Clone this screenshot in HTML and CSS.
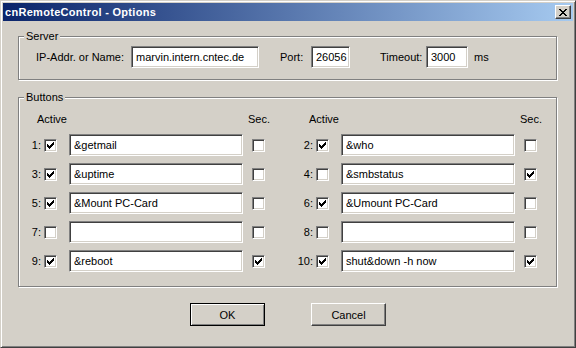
FILE: index.html
```html
<!DOCTYPE html>
<html lang="en">
<head>
    <meta charset="UTF-8">
    <title>cnRemoteControl - Options</title>
    <link rel="stylesheet" href="styles.css">
</head>
<body>
    <svg class="defs" width="0" height="0">
        <symbol id="tick" viewBox="0 0 7 7">
            <path d="M6 0h1v1h-1z M5 1h2v1h-2z M0 2h1v1h-1z M4 2h3v1h-3z M0 3h2v1h-2z M3 3h3v1h-3z M0 4h5v1h-5z M1 5h3v1h-3z M2 6h1v1h-1z" fill="#000"/>
        </symbol>
    </svg>

    <div class="window">
        <div class="titlebar">
            <span class="title">cnRemoteControl - Options</span>
            <button class="close-btn">
                <svg width="8" height="7" viewBox="0 0 8 7" shape-rendering="crispEdges">
                    <path d="M0 0h2v1h-2z M6 0h2v1h-2z M1 1h2v1h-2z M5 1h2v1h-2z M2 2h4v1h-4z M3 3h2v1h-2z M2 4h4v1h-4z M1 5h2v1h-2z M5 5h2v1h-2z M0 6h2v1h-2z M6 6h2v1h-2z" fill="#000"/>
                </svg>
            </button>
        </div>

        <div class="content">
            <fieldset class="group server">
                <legend>Server</legend>
                <div class="server-row">
                    <label class="lbl-host">IP-Addr. or Name:</label>
                    <input class="edit edit-host" value="marvin.intern.cntec.de">
                    <label class="lbl-port">Port:</label>
                    <input class="edit edit-port" value="26056">
                    <label class="lbl-timeout">Timeout:</label>
                    <input class="edit edit-timeout" value="3000">
                    <span class="unit">ms</span>
                </div>
            </fieldset>

            <fieldset class="group buttons">
                <legend>Buttons</legend>
                <div class="columns">
                    <div class="col">
                        <div class="head"><span class="head-active">Active</span><span>Sec.</span></div>
                        <div class="row"><span class="num">1:</span><span class="cb"><svg><use href="#tick"/></svg></span><input class="edit cmd" value="&amp;getmail"><span class="cb sec"></span></div>
                        <div class="row"><span class="num">3:</span><span class="cb"><svg><use href="#tick"/></svg></span><input class="edit cmd" value="&amp;uptime"><span class="cb sec"></span></div>
                        <div class="row"><span class="num">5:</span><span class="cb"><svg><use href="#tick"/></svg></span><input class="edit cmd" value="&amp;Mount PC-Card"><span class="cb sec"></span></div>
                        <div class="row"><span class="num">7:</span><span class="cb"></span><input class="edit cmd" value=""><span class="cb sec"></span></div>
                        <div class="row"><span class="num">9:</span><span class="cb"><svg><use href="#tick"/></svg></span><input class="edit cmd" value="&amp;reboot"><span class="cb sec"><svg><use href="#tick"/></svg></span></div>
                    </div>
                    <div class="col">
                        <div class="head"><span class="head-active">Active</span><span>Sec.</span></div>
                        <div class="row"><span class="num">2:</span><span class="cb"><svg><use href="#tick"/></svg></span><input class="edit cmd" value="&amp;who"><span class="cb sec"></span></div>
                        <div class="row"><span class="num">4:</span><span class="cb"></span><input class="edit cmd" value="&amp;smbstatus"><span class="cb sec"><svg><use href="#tick"/></svg></span></div>
                        <div class="row"><span class="num">6:</span><span class="cb"><svg><use href="#tick"/></svg></span><input class="edit cmd" value="&amp;Umount PC-Card"><span class="cb sec"></span></div>
                        <div class="row"><span class="num">8:</span><span class="cb"></span><input class="edit cmd" value=""><span class="cb sec"></span></div>
                        <div class="row"><span class="num">10:</span><span class="cb"><svg><use href="#tick"/></svg></span><input class="edit cmd" value="shut&amp;down -h now"><span class="cb sec"><svg><use href="#tick"/></svg></span></div>
                    </div>
                </div>
            </fieldset>

            <div class="actions">
                <button class="btn default">OK</button>
                <button class="btn">Cancel</button>
            </div>
        </div>
    </div>
</body>
</html>
```

FILE: styles.css
```css
* {
    box-sizing: border-box;
}

body {
    margin: 0;
    font-family: "Liberation Sans", Arial, sans-serif;
    font-size: 11px;
    color: #000;
    background: #d4d0c8;
}

.defs {
    position: absolute;
}

.window {
    width: 576px;
    height: 348px;
    padding: 2px;
    background: #d4d0c8;
    border: 1px solid;
    border-color: #d4d0c8 #404040 #404040 #d4d0c8;
    box-shadow: inset 1px 1px #fff, inset -1px -1px #808080;
}

.titlebar {
    height: 18px;
    display: flex;
    align-items: center;
    justify-content: space-between;
    padding: 0 2px;
    background: linear-gradient(to right, #0a246a, #a6caf0);
}

.title {
    color: #fff;
    font-weight: bold;
    letter-spacing: 0.3px;
}

.close-btn {
    width: 16px;
    height: 14px;
    padding: 0;
    display: flex;
    align-items: center;
    justify-content: center;
    background: #d4d0c8;
    border: 1px solid;
    border-color: #fff #404040 #404040 #fff;
    box-shadow: inset -1px -1px #808080;
}

.content {
    padding: 0 15px;
}

.group {
    width: 539px;
    margin: 0;
    padding: 0;
    min-width: 0;
    border: 1px solid #808080;
    box-shadow: inset 1px 1px #fff, 1px 1px #fff;
}

.group legend {
    margin-left: 5px;
    padding: 0 2px;
    line-height: 13px;
    background: #d4d0c8;
}

.server {
    margin-top: 9px;
    padding: 3px 0 11px;
}

.server-row {
    display: flex;
    align-items: center;
}

.lbl-host {
    margin-left: 17px;
    width: 95px;
}

.lbl-port {
    margin-left: 21px;
    width: 31px;
}

.lbl-timeout {
    margin-left: 30px;
    width: 46px;
}

.unit {
    margin-left: 6px;
}

.edit {
    height: 22px;
    padding: 0 0 0 4px;
    font: inherit;
    color: #000;
    background: #fff;
    border: 1px solid;
    border-color: #808080 #fff #fff #808080;
    box-shadow: inset 1px 1px #404040, inset -1px -1px #d4d0c8;
    outline: none;
}

.edit-host {
    width: 128px;
}

.edit-port {
    width: 39px;
}

.edit-timeout {
    width: 42px;
}

.buttons {
    margin-top: 11px;
    padding: 9px 0 14px;
}

.columns {
    display: flex;
    gap: 26px;
}

.col {
    width: 246px;
    display: flex;
    flex-direction: column;
    gap: 7px;
}

.head {
    display: flex;
    line-height: 13px;
    margin-bottom: 1px;
    white-space: nowrap;
}

.head-active {
    flex: none;
    width: 229px;
    padding-left: 18px;
}

.row {
    display: flex;
    align-items: center;
    height: 22px;
}

.num {
    flex: none;
    width: 22px;
    text-align: right;
}

.cb {
    flex: none;
    width: 13px;
    height: 13px;
    margin-left: 3px;
    display: flex;
    align-items: center;
    justify-content: center;
    background: #fff;
    border: 1px solid;
    border-color: #808080 #fff #fff #808080;
    box-shadow: inset 1px 1px #404040, inset -1px -1px #d4d0c8;
}

.cb svg {
    width: 7px;
    height: 7px;
    shape-rendering: crispEdges;
}

.cmd {
    flex: none;
    width: 174px;
    margin-left: 12px;
}

.cb.sec {
    margin-left: 9px;
}

.actions {
    display: flex;
    justify-content: center;
    gap: 46px;
    margin-top: 16px;
}

.btn {
    width: 75px;
    height: 23px;
    padding: 0;
    font: inherit;
    color: #000;
    background: #d4d0c8;
    border: 1px solid;
    border-color: #fff #404040 #404040 #fff;
    box-shadow: inset -1px -1px #808080;
}

.btn.default {
    border-color: #000;
    box-shadow: inset 1px 1px #fff, inset -1px -1px #808080;
}
```
